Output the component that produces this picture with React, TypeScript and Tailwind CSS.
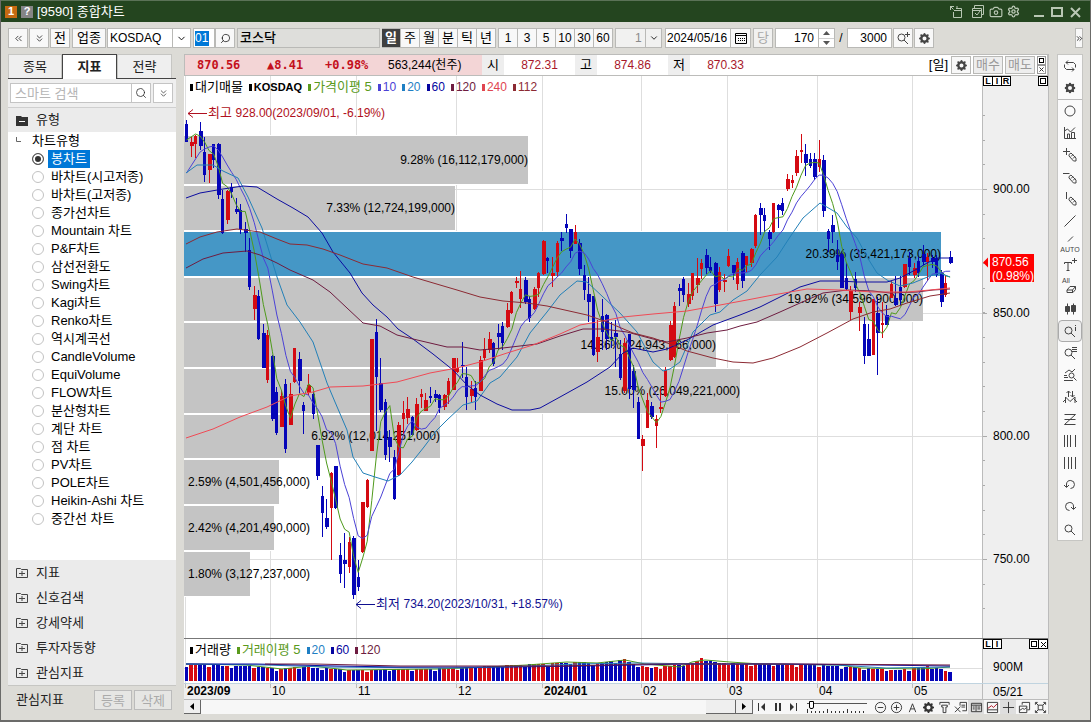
import React, { useState } from 'react';
import clsx from 'clsx';
import { twMerge } from 'tailwind-merge';
import { BsGearFill } from 'react-icons/bs';
import { Camera, ChevronDown, ChevronsDown, ChevronsLeft, ChevronsRight, Search, Settings } from 'lucide-react';

// one row per trading day: high, body top, body bottom, low (chart y), 1 = up day
type Candle = [number, number, number, number, number];

const CANDLES: Candle[] = [
    [120, 124, 142, 142, 0], [137, 142, 146, 157, 1], [135, 136, 144, 158, 1], [122, 131, 146, 150, 0], [137, 152, 175, 182, 0],
    [154, 154, 170, 183, 1], [144, 144, 160, 168, 0], [143, 144, 195, 199, 0], [190, 199, 233, 234, 0], [190, 191, 220, 224, 1],
    [183, 187, 192, 198, 0], [198, 209, 212, 214, 0], [204, 210, 229, 234, 0], [222, 229, 233, 252, 0], [238, 250, 287, 290, 0],
    [286, 295, 309, 320, 1], [290, 296, 339, 340, 0], [324, 333, 368, 368, 0], [330, 335, 380, 383, 1], [355, 356, 419, 421, 0],
    [387, 392, 433, 435, 0], [390, 396, 427, 427, 1], [379, 384, 449, 453, 0], [383, 394, 425, 425, 1], [348, 348, 382, 383, 1],
    [352, 359, 381, 393, 0], [402, 405, 411, 434, 0], [374, 385, 393, 395, 1], [390, 394, 414, 419, 0], [445, 445, 476, 480, 0],
    [486, 496, 513, 537, 0], [499, 518, 527, 529, 0], [472, 473, 508, 560, 1], [466, 466, 508, 509, 0], [543, 555, 574, 583, 0],
    [533, 560, 564, 588, 0], [537, 542, 567, 573, 1], [536, 538, 595, 599, 0], [560, 577, 587, 591, 0], [502, 502, 552, 553, 1],
    [479, 480, 507, 508, 1], [339, 339, 451, 451, 1], [319, 332, 377, 431, 0], [358, 383, 410, 412, 0], [399, 402, 455, 460, 0],
    [430, 437, 447, 462, 0], [450, 457, 499, 500, 0], [422, 425, 475, 476, 1], [401, 413, 419, 436, 1], [397, 409, 418, 424, 1],
    [416, 417, 435, 436, 0], [398, 404, 430, 431, 1], [389, 394, 397, 408, 1], [393, 400, 411, 411, 1], [387, 396, 398, 403, 0],
    [390, 394, 398, 402, 0], [394, 395, 408, 413, 0], [394, 395, 407, 410, 1], [378, 381, 395, 404, 1], [358, 358, 390, 390, 1],
    [358, 368, 372, 373, 1], [342, 365, 366, 378, 0], [367, 377, 397, 410, 0], [381, 389, 396, 402, 1], [381, 388, 397, 410, 0],
    [356, 360, 391, 391, 1], [338, 349, 358, 360, 1], [332, 339, 350, 353, 1], [342, 343, 364, 366, 0], [324, 333, 337, 350, 0],
    [322, 326, 343, 350, 0], [303, 310, 327, 328, 1], [291, 292, 313, 314, 1], [277, 281, 283, 288, 1], [271, 289, 299, 308, 1],
    [277, 280, 302, 304, 0], [296, 299, 318, 322, 0], [287, 289, 309, 310, 1], [272, 273, 288, 297, 1], [240, 241, 274, 275, 1],
    [257, 258, 261, 273, 0], [257, 273, 276, 287, 1], [241, 243, 272, 277, 1], [232, 238, 241, 251, 0], [214, 224, 228, 233, 0],
    [229, 229, 251, 258, 0], [225, 232, 244, 244, 1], [239, 243, 269, 275, 0], [265, 275, 290, 300, 0], [277, 294, 302, 322, 0],
    [296, 296, 355, 356, 0], [320, 337, 352, 362, 1], [299, 316, 332, 350, 0], [314, 315, 339, 350, 0], [322, 337, 340, 348, 0],
    [320, 333, 337, 367, 0], [340, 354, 378, 380, 0], [338, 343, 391, 393, 1], [334, 334, 389, 399, 0], [365, 371, 390, 408, 0],
    [397, 402, 439, 439, 0], [435, 439, 446, 471, 1], [393, 400, 428, 428, 1], [402, 406, 417, 419, 0], [415, 419, 426, 448, 1],
    [388, 407, 409, 413, 1], [367, 370, 396, 397, 1], [321, 325, 360, 361, 1], [302, 306, 357, 358, 1], [284, 288, 291, 306, 0],
    [277, 279, 295, 302, 0], [283, 294, 304, 307, 1], [273, 273, 296, 300, 1], [258, 278, 285, 293, 1], [259, 263, 269, 279, 1],
    [249, 255, 268, 274, 0], [257, 267, 271, 273, 0], [262, 263, 304, 312, 0], [267, 272, 290, 292, 1], [274, 280, 282, 292, 1],
    [249, 256, 266, 267, 1], [265, 265, 273, 280, 0], [258, 262, 284, 290, 1], [251, 253, 281, 288, 0], [256, 256, 265, 272, 1],
    [248, 249, 263, 267, 1], [214, 215, 246, 248, 1], [203, 208, 215, 235, 0], [208, 215, 221, 232, 0], [230, 232, 239, 250, 0],
    [203, 203, 232, 233, 1], [204, 205, 210, 228, 0], [198, 203, 211, 215, 0], [174, 179, 189, 191, 1], [175, 180, 183, 188, 1],
    [150, 156, 173, 176, 1], [134, 150, 152, 163, 1], [144, 154, 163, 176, 0], [153, 159, 166, 168, 0], [153, 159, 177, 180, 0],
    [140, 159, 167, 172, 1], [155, 160, 211, 217, 0], [229, 231, 239, 252, 0], [215, 225, 232, 243, 0], [240, 255, 262, 270, 0],
    [253, 254, 288, 288, 0], [262, 278, 289, 291, 0], [286, 291, 312, 320, 1], [272, 279, 288, 292, 0], [302, 307, 313, 331, 1],
    [317, 324, 356, 364, 0], [324, 339, 356, 356, 0], [299, 299, 355, 355, 1], [297, 313, 333, 375, 0], [302, 323, 325, 338, 1],
    [305, 315, 325, 325, 0], [281, 284, 298, 298, 1], [276, 298, 305, 306, 0], [276, 287, 300, 305, 0], [264, 264, 287, 288, 1],
    [252, 258, 267, 275, 0], [263, 268, 275, 278, 1], [257, 261, 273, 277, 0], [245, 254, 262, 265, 0], [253, 257, 262, 281, 1],
    [255, 258, 262, 268, 0], [255, 258, 275, 277, 0], [270, 273, 302, 307, 0], [275, 283, 295, 297, 1], [251, 257, 263, 264, 0],
];

const STEP = 4.5187;
const xOf = (i: number) => 186.5 + i * STEP;
const closeOf = (c: Candle) => (c[4] ? c[1] : c[2]);

function average(period: number, seed: number[]) {
    return CANDLES.map((_, i) => {
        if (i < seed.length) return `${xOf(i)},${seed[i]}`;
        const part = CANDLES.slice(Math.max(0, i - period + 1), i + 1);
        return `${xOf(i)},${part.reduce((s, c) => s + closeOf(c), 0) / part.length}`;
    }).join(' ');
}

const LINES = [
    { color: '#4f9a1c', points: average(5, [140, 137, 134, 136, 142]) },
    { color: '#4b42d6', points: average(10, [173, 166, 159, 152, 149, 147, 146, 150, 157, 165]) },
    { color: '#2280b8', points: '186,173 197,165 213,165 223,171 238,178 248,197 262,228 277,277 287,305 300,322 313,342 327,383 335,402 347,430 353,457 363,473 375,477 388,481 400,475 412,462 424,447 436,431 447,420 463,405 477,401 490,383 500,377 517,357 530,333 547,312 560,295 577,281 587,282 603,297 620,313 637,332 653,362 663,371 670,369 680,362 693,332 710,315 720,312 733,300 747,291 760,275 777,257 790,237 803,218 820,203 837,213 847,227 857,238 867,257 877,273 887,280 900,286 913,283 930,276 940,273 950,277' },
    { color: '#0c0ca0', points: '186,198 200,193 223,189 243,186 257,187 277,199 293,208 308,217 322,233 333,252 350,273 362,293 373,305 387,317 398,329 413,339 433,354 453,370 467,385 480,395 497,404 512,410 530,410 540,408 560,397 587,382 610,367 623,353 633,348 653,352 667,349 687,340 713,325 740,315 760,307 780,297 800,287 820,281 840,281 857,282 887,282 900,278 917,269 927,263 937,258 950,258' },
    { color: '#6e1c40', points: '186,268 203,259 223,253 247,251 260,255 277,263 290,270 313,280 330,292 347,308 363,323 380,326 397,335 413,339 447,347 463,347 480,350 503,348 537,344 560,336 583,329 603,329 627,332 653,339 667,342 687,338 707,333 727,330 740,326 757,322 780,312 800,303 823,293 847,290 873,291 890,293 917,292 933,290 950,289' },
    { color: '#f04a55', points: '186,438 213,429 240,417 267,407 290,396 313,392 330,387 363,386 397,382 430,373 457,368 480,362 507,353 533,345 560,334 580,325 597,322 623,317 653,314 687,311 720,305 747,300 773,295 807,289 840,290 873,292 907,292 930,290 950,288' },
    { color: '#8c2a33', points: '186,244 200,237 217,232 237,229 260,232 277,239 290,244 307,245 323,249 340,255 363,264 387,268 413,277 440,285 457,290 480,297 503,301 527,303 547,306 587,315 607,322 633,333 653,338 670,344 687,351 713,358 733,362 753,363 773,358 800,347 827,333 853,319 873,312 890,309 907,303 930,296 950,293' },
];

const BANDS = [
    { y: 136, h: 48, end: 528, label: '9.28% (16,112,179,000)' },
    { y: 186, h: 44, end: 455, label: '7.33% (12,724,199,000)' },
    { y: 232, h: 44, end: 941, label: '20.39% (35,421,173,000)', current: true },
    { y: 278, h: 43, end: 923, label: '19.92% (34,596,900,000)' },
    { y: 323, h: 44, end: 716, label: '14.36% (24,943,266,000)' },
    { y: 369, h: 44, end: 740, label: '15.00% (26,049,221,000)' },
    { y: 415, h: 43, end: 440, label: '6.92% (12,014,251,000)' },
    { y: 460, h: 44, end: 279, label: '2.59% (4,501,456,000)' },
    { y: 506, h: 44, end: 274, label: '2.42% (4,201,490,000)' },
    { y: 552, h: 44, end: 250, label: '1.80% (3,127,237,000)' },
];

const MONTHS = [
    { x: 186, label: '2023/09', bold: true }, { x: 271, label: '10' }, { x: 357, label: '11' }, { x: 457, label: '12' },
    { x: 543, label: '2024/01', bold: true }, { x: 642, label: '02' }, { x: 728, label: '03' }, { x: 818, label: '04' }, { x: 913, label: '05' },
];

const PRICES = [{ y: 189, label: '900.00' }, { y: 313, label: '850.00' }, { y: 436, label: '800.00' }, { y: 559, label: '750.00' }];

// bar tops: [day, y] anchors, filled in linearly
const VOLUME: [number, number][] = [[0, 665], [15, 666], [20, 669], [25, 667], [30, 668], [36, 670], [50, 669], [60, 668], [66, 666], [78, 664], [86, 662], [92, 663], [97, 659], [99, 664], [103, 668], [108, 665], [112, 663], [114, 658], [118, 663], [126, 664], [140, 665], [150, 668], [158, 670], [164, 666], [167, 669], [169, 672]];

function volumeTop(i: number) {
    const k = Math.max(1, VOLUME.findIndex(([d]) => d >= i));
    const [d0, y0] = VOLUME[k - 1];
    const [d1, y1] = VOLUME[k];
    return Math.round(y0 + ((y1 - y0) * (i - d0)) / (d1 - d0) + ((i * 7) % 5 === 0 ? 2 : 0));
}

const TYPES = ['봉차트', '바차트(시고저종)', '바차트(고저종)', '종가선차트', 'Mountain 차트', 'P&F차트', '삼선전환도', 'Swing차트', 'Kagi차트', 'Renko차트', '역시계곡선', 'CandleVolume', 'EquiVolume', 'FLOW차트', '분산형차트', '계단 차트', '점 차트', 'PV차트', 'POLE차트', 'Heikin-Ashi 차트', '중간선 차트'];

const BTN = 'flex h-5 items-center justify-center border border-[#b9b9b6] bg-[#f8f8f8]';

function Ico({ children, size = 14 }: { children: React.ReactNode; size?: number }) {
    return (
        <svg width={size} height={size} viewBox="0 0 14 14" fill="none" stroke="currentColor" strokeWidth="1" aria-hidden="true">
            {children}
        </svg>
    );
}

const pencil = <path d="M6 6.5 8 5l5 5v3h-2.500L6 8zM8 8.500l2-2M10 10.500l2-2" />;
const lens = <><circle cx="5.5" cy="6.5" r="3.5" /><path d="m8 9 4 4" /></>;

const TOOLS: { name: string; icon: React.ReactNode; on?: boolean }[] = [
    { name: '새로고침', icon: <path d="M5 1.5 3 3.5l2 2M3 3.5h7.5l2 2v3M9 8.5l2 2-2 2M11 10.5H3.5l-2-2v-3" /> },
    { name: '설정', icon: <g transform="translate(1.5 1.5)" fill="currentColor" stroke="none"><BsGearFill size={11} /></g> },
    { name: '원', icon: <circle cx="7" cy="7" r="5" /> },
    { name: '차트', icon: <path d="M1.5 1v11.5H13M1.5 5l3-2 3 3L12 1.5M4.5 12V8h2v4M8.5 12V6.500h3V12" /> },
    { name: '십자선', icon: <>{pencil}<path d="M3.5 0v7M0 3.5h7" /></> },
    { name: '수평선', icon: <>{pencil}<path d="M0 3.5h6.500" /></> },
    { name: '수직선', icon: <>{pencil}<path d="M3.5 0v7" /></> },
    { name: '추세선', icon: <path d="m1.500 12.500 11-11" /> },
    { name: '자동', icon: <path d="m5 5.500 5-5" /> },
    { name: '문자', icon: <path d="M1.500 6V4.500h7V6M5 4.500v8M3.500 12.500h3M9 2.500h5M11.500 0v5" /> },
    { name: '전체삭제', icon: <path d="m4 10 3-3.500h5.500v3L10 12.500H4zM4 10h5.500l3-3.500M9.500 10v2.500" /> },
    { name: '봉', icon: <path fill="currentColor" d="M4.500 1.500v11M10.500 1.500v11M2.500 4.500h4v5h-4zM8.500 3.500h4v6h-4z" /> },
    { name: '정보', on: true, icon: <>{lens}<path d="M12.500 1v1M12.500 3v4" /></> },
    { name: '목록', icon: <>{lens}<path d="M9 1.500h5M9 3.500h5M9 5.500h5" /></> },
    { name: '분석', icon: <><circle cx="8.500" cy="7.500" r="2.500" /><path d="m10.500 9.500 3 3M1 7.500h3M1 9.500h4M1 12.500h9M2 5l4-3 3 2 3-3" /></> },
    { name: '신호', icon: <path d="M5.500 7V1M3.500 3l2-2 2 2M9.500 1v6M7.500 5l2 2 2-2M2.500 13V7L7 11.500 12 7v6M0 12l3-3M11 9l3 3" /> },
    { name: '되돌림', icon: <path d="M1.500 2.500h11M1.500 7.500h11M1.500 12.500h11M12.500 2.500l-11 10" /> },
    { name: '간격', icon: <path d="M1.500 1v12M4.500 1v12M7.500 1v12M12.500 1v12" /> },
    { name: '등간격', icon: <path d="M1.500 1v12M5.500 1v12M8.500 1v12M12.500 1v12" /> },
    { name: '실행취소', icon: <path d="M3.500 9V6a4 4 0 1 1 4 4.500M1 7l2.500 2.500L6 7" /> },
    { name: '다시실행', icon: <path d="M10.500 9V6a4 4 0 1 0-4 4.500M8 7l2.500 2.500L13 7" /> },
    { name: '확대', icon: lens },
];

const BOTTOM: { name: string; icon: React.ReactNode; on?: boolean }[] = [
    { name: '축소', icon: <><circle cx="7" cy="7" r="5.500" /><path d="M4 7h6" /></> },
    { name: '확대', icon: <><circle cx="7" cy="7" r="5.500" /><path d="M4 7h6M7 4v6" /></> },
    { name: '글자', icon: <path d="m3.500 12 3.500-9 3.500 9M5 8.500h4" /> },
    { name: '설정', icon: <g transform="translate(1 1)" fill="currentColor" stroke="none"><BsGearFill size={12} /></g> },
    { name: '도구', icon: <path d="M2 4V1.500h10V4M4 4.500h6v2H8.500v6h-3v-6H4z" /> },
    { name: '엑셀', icon: <path d="M6.500 5V1.500h7v9H9M8 4.500h4M8 6.500h4M1 6l6 6M7 6l-6 6" /> },
    { name: '표', on: true, icon: <path d="M1.500 2.500h11v9h-11zM1.500 4.500h11M6.500 5v6M3 6.500h2M3 8.500h2M8 6.500h3M8 8.500h3" /> },
    { name: '차트', icon: <><path d="M1.500 1.500h11v11h-11zM2 9.500h10" /><path stroke="#b01020" d="m2 8 4-3 2 2 4-4" /></> },
    { name: '십자', on: true, icon: <path d="M7 1v12M1 7h12" /> },
    { name: '복사', icon: <path d="M4.500 4V1.500h8v8H10M1.500 5.500h8v7h-8zM2 10l3-2 2 1 2-2" /> },
    { name: '전체화면', icon: <path d="M1.500 4V1.500H4M10 1.500h2.500V4M12.500 10v2.500H10M4 12.500H1.500V10M4.500 4.500h5v5h-5zM2 2l2.500 2.500M12 2 9.500 4.500M2 12l2.500-2.500M12 12 9.500 9.500" /> },
];

function TitleBar() {
    return (
        <header className="flex h-[22px] shrink-0 items-center border-t border-[#5b7257] bg-[#24451f] pr-2 pl-1 text-white">
            <span className="mr-1 flex h-3 w-3 items-center justify-center bg-[#c66a12] text-[11px] font-bold">1</span>
            <span className="mr-1 flex h-3 w-3 items-center justify-center bg-[#858585] text-[11px] font-bold">?</span>
            <h1 className="text-[13px]">[9590] 종합차트</h1>
            <div className="ml-auto flex items-center gap-1 text-[#b9c7b4]">
                <button aria-label="고정"><Ico><path d="M1 1.500h4M1.500 1v4M1.500 1.500l3 3M4.500 7v5.500h8v-9H7M5 5.500h7M8 1v3" /></Ico></button>
                <button aria-label="복제" className="ml-1"><Ico><path d="M3.500 3V.5h9v9H11M1.500 3.500h9v9h-9zM1.500 5.500h9M4 8l2 2 3-4" /></Ico></button>
                <button aria-label="캡처"><Camera size={14} strokeWidth={2} /></button>
                <button aria-label="설정" className="mr-2"><Settings size={13} strokeWidth={2.5} /></button>
                <button aria-label="최소화"><Ico><path strokeWidth="2" d="M2 11h10" /></Ico></button>
                <button aria-label="최대화"><Ico><path strokeWidth="2" d="M2 3h10v8H2z" /></Ico></button>
                <button aria-label="닫기"><Ico><path strokeWidth="2" d="m3 3 9 9M12 3l-9 9" /></Ico></button>
            </div>
        </header>
    );
}

function Toolbar() {
    return (
        <div className="flex h-8 shrink-0 items-center px-[7px] text-xs">
            <button aria-label="이전" className={twMerge(BTN, 'w-5')}><ChevronsLeft size={11} strokeWidth={1.5} /></button>
            <button aria-label="펼치기" className={twMerge(BTN, 'ml-px w-5')}><ChevronsDown size={11} strokeWidth={1.5} /></button>
            <button className={twMerge(BTN, 'ml-px w-5 text-[13px]')}>전</button>
            <button className={twMerge(BTN, 'ml-0.5 w-[34px] text-[13px]')}>업종</button>
            <div className="relative ml-px h-5 w-[84px] border border-[#b9b9b6] bg-white">
                <select aria-label="시장" className="h-full w-full appearance-none pl-0.5 outline-none"><option>KOSDAQ</option></select>
                <span className="pointer-events-none absolute inset-y-0 right-0 flex w-[18px] items-center justify-center border-l border-[#b9b9b6]"><ChevronDown size={11} /></span>
            </div>
            <div className="ml-0.5 flex h-5 w-[22px] items-center border border-[#b9b9b6] bg-white pl-px">
                <input aria-label="종목코드" defaultValue="01" className="h-[15px] w-[14px] bg-[#0078d7] text-white outline-none" />
            </div>
            <button aria-label="종목 찾기" className={twMerge(BTN, 'w-5')}><Search size={11} strokeWidth={1.5} className="-scale-x-100" /></button>
            <output className="ml-0.5 flex h-5 w-[143px] items-center border border-[#b9b9b6] bg-[#dededb] pl-0.5 text-[13px] font-medium">코스닥</output>
            <div className="ml-0.5 flex">
                {['일', '주', '월', '분', '틱', '년'].map((p, i) => (
                    <button key={p} className={clsx('flex h-5 w-[19px] items-center justify-center border-y border-r border-[#b9b9b6] text-[13px]', i === 0 ? 'bg-[#3f3f3f] font-bold text-white' : 'bg-[#f8f8f8]')}>{p}</button>
                ))}
            </div>
            <div className="ml-0.5 flex border-l border-[#b9b9b6]">
                {['1', '3', '5', '10', '30', '60'].map(p => (
                    <button key={p} className="flex h-5 w-[19px] items-center justify-center border-y border-r border-[#b9b9b6] bg-[#f8f8f8]">{p}</button>
                ))}
            </div>
            <div className="relative ml-0.5 h-5 w-[47px] border border-[#b9b9b6] bg-[#f1f1f0]">
                <select aria-label="간격" className="h-full w-full appearance-none pl-[19px] text-[#8a8a8a] outline-none"><option>1</option></select>
                <span className="pointer-events-none absolute inset-y-0 right-0 flex w-4 items-center justify-center border-l border-[#b9b9b6]"><ChevronDown size={10} /></span>
            </div>
            <input aria-label="날짜" defaultValue="2024/05/16" className="ml-[3px] h-5 w-[66px] border border-[#b9b9b6] bg-white pl-px outline-none" />
            <button aria-label="달력" className={twMerge(BTN, '-ml-px w-[21px]')}><Ico><path d="M1.500 2.500h11v10h-11zM1.500 4.500h11" /><path d="M4 7.500h7M4 9.500h7" strokeDasharray="1 1" /></Ico></button>
            <button className={twMerge(BTN, 'ml-0.5 w-5 bg-[#f1f1f0] text-[13px] text-[#a9a9a9]')}>당</button>
            <div className="ml-0.5 flex h-5 border border-[#b9b9b6] bg-white">
                <input aria-label="표시 개수" defaultValue="170" className="w-[42px] pr-1 text-right outline-none" />
                <div className="flex w-4 flex-col border-l border-[#b9b9b6] text-[#555]">
                    <button aria-label="증가" className="flex flex-1 items-center justify-center border-b border-[#d0d0d0]"><svg width="7" height="4"><path d="M0 4h7L3.5 0z" fill="currentColor" /></svg></button>
                    <button aria-label="감소" className="flex flex-1 items-center justify-center"><svg width="7" height="4"><path d="M0 0h7L3.5 4z" fill="currentColor" /></svg></button>
                </div>
            </div>
            <span className="w-3 text-center">/</span>
            <input aria-label="전체 개수" defaultValue="3000" className="h-5 w-[45px] border border-[#b9b9b6] bg-white pr-1 text-right outline-none" />
            <button aria-label="확대" className={twMerge(BTN, 'ml-px w-5 text-[#444]')}><Ico>{lens}<path d="M9 3.500h5M11.500 1v5" /></Ico></button>
            <button aria-label="설정" className={twMerge(BTN, 'ml-px w-5 text-[#444]')}><BsGearFill size={11} /></button>
            <button aria-label="더보기" className="ml-auto flex h-5 w-2 items-center justify-center border border-[#b9b9b6] bg-[#f8f8f8]"><ChevronsRight size={9} className="shrink-0" /></button>
        </div>
    );
}

function Sidebar() {
    const [type, setType] = useState(TYPES[0]);
    return (
        <aside className="flex w-[168px] shrink-0 flex-col bg-[#ebebeb] text-[13px] text-[#222]">
            <div className="flex h-[25px] shrink-0 border-b border-[#444] bg-[#dcdbd6]">
                <button className="w-[54px] border border-b-0 border-[#c6c6c3] bg-[#efefef]">종목</button>
                <button className="-mb-px w-[55px] border border-b-0 border-[#444] bg-white font-bold">지표</button>
                <button className="w-[55px] border border-b-0 border-[#c6c6c3] bg-[#efefef]">전략</button>
            </div>
            <div className="flex h-[29px] shrink-0 items-center border-b border-[#cfcfcf] bg-[#efefef] pl-0.5">
                <input aria-label="스마트 검색" placeholder="스마트 검색" className="h-5 w-[122px] border border-[#c4c4c4] bg-white pl-1 outline-none placeholder:text-[#b5b5b5]" />
                <button aria-label="검색" className="-ml-px flex h-5 w-5 items-center justify-center border border-[#c4c4c4] bg-white"><Search size={12} strokeWidth={1.5} /></button>
                <button aria-label="옵션" className="ml-0.5 flex h-5 w-5 items-center justify-center border border-[#c4c4c4] bg-white"><ChevronsDown size={11} strokeWidth={1.5} /></button>
            </div>
            <button className="flex h-6 shrink-0 items-center gap-2 pl-2 text-left">
                <svg width="12" height="11" aria-hidden="true"><path d="M0 1h5l1 1h6v9H0z" fill="#333" /><path d="M3 6.500h6" stroke="#fff" /></svg>
                유형
            </button>
            <div role="radiogroup" aria-label="차트유형" className="flex-1 bg-white text-black">
                <div className="flex h-[18px] items-center pl-2">
                    <svg width="16" height="10" aria-hidden="true"><path d="M.5 1v4.500H5" fill="none" stroke="#666" /></svg>
                    차트유형
                </div>
                {TYPES.map(t => (
                    <label key={t} className="flex h-[18px] items-center pl-6">
                        <input type="radio" name="type" checked={t === type} onChange={() => setType(t)} className="h-3 w-3 appearance-none rounded-full border border-[#c2c2c2] bg-white checked:border-[#555] checked:bg-[#333] checked:shadow-[inset_0_0_0_2px_#fff]" />
                        <span className={clsx('ml-1 flex h-[18px] items-center px-[3px] whitespace-nowrap', t === type && 'bg-[#0078d7] text-white')}>{t}</span>
                    </label>
                ))}
            </div>
            {['지표', '신호검색', '강세약세', '투자자동향', '관심지표'].map(g => (
                <button key={g} className="flex h-[25px] shrink-0 items-center gap-2 pl-2 text-left">
                    <svg width="12" height="11" fill="none" stroke="#444" aria-hidden="true"><path d="M.5 1.500h4l1 1h6v8H.5zM3 6.500h6M6 4v5" /></svg>
                    {g}
                </button>
            ))}
            <div className="flex h-[29px] shrink-0 items-center border-t border-[#c6c6c3] bg-[#dcdbd6] pr-1 pl-2">
                관심지표
                <button className="ml-auto h-5 w-[38px] border border-[#bbb] bg-[#e6e6e4] leading-none text-[#aaa]">등록</button>
                <button className="ml-0.5 h-5 w-[38px] border border-[#bbb] bg-[#e6e6e4] leading-none text-[#aaa]">삭제</button>
            </div>
        </aside>
    );
}

function QuoteBar() {
    return (
        <div className="flex h-[22px] shrink-0 items-center border border-[#bcbcba] bg-white text-xs">
            <div className="flex h-full w-[297px] items-center bg-[#f3d5d6] pl-3 font-['DejaVu_Sans_Mono',monospace] font-bold whitespace-nowrap text-[#c4101c]">
                <span className="w-[70px]">870.56</span>
                <span className="w-[58px]">▲8.41</span>
                <span className="w-[63px]">+0.98%</span>
                <span className="font-['Liberation_Sans','Noto_Sans_CJK_KR',sans-serif] font-normal text-black">563,244(천주)</span>
            </div>
            {[['시', '872.31'], ['고', '874.86'], ['저', '870.33']].map(([k, v]) => (
                <React.Fragment key={k}>
                    <span className="flex h-full w-[22px] items-center justify-center bg-[#eee] text-[13px]">{k}</span>
                    <span className="w-[71px] text-center text-[#a8182a]">{v}</span>
                </React.Fragment>
            ))}
            <div className="mr-px ml-auto flex items-center text-[13px]">
                <span className="mr-[3px]">[일]</span>
                <button aria-label="차트 설정" className={twMerge(BTN, 'h-[18px] w-5 text-[#444]')}><BsGearFill size={11} /></button>
                <button className={twMerge(BTN, 'ml-0.5 h-[18px] w-[30px] bg-[#eee] text-[#999]')}>매수</button>
                <button className={twMerge(BTN, 'ml-0.5 h-[18px] w-[30px] bg-[#eee] text-[#999]')}>매도</button>
                <div className="ml-0.5 flex flex-col">
                    <button aria-label="최대화" className="h-[9px] w-[9px] border border-[#999] p-px"><span className="block h-[5px] w-[5px] border border-black" /></button>
                    <button aria-label="닫기" className="h-[9px] w-[9px] border border-[#999]"><svg width="7" height="7"><path d="m1.500 1.500 4 4m0-4-4 4" stroke="#333" /></svg></button>
                </div>
            </div>
        </div>
    );
}

function Legend({ items }: { items: { text: string; color: string; className?: string }[] }) {
    return (
        <div className="absolute top-0.5 left-1.5 flex h-[18px] items-center gap-[6px]">
            {items.map(({ text, color, className = 'text-xs' }) => (
                <span key={text} className={clsx('flex items-center gap-0.5 whitespace-nowrap', className)} style={{ color }}>
                    <i className="h-[7px] w-[3px] bg-current" />{text}
                </span>
            ))}
        </div>
    );
}

function PaneBoxes({ left, right }: { left: string[]; right: string[] }) {
    const box = '-ml-px flex h-[10px] w-[10px] items-center justify-center border border-black bg-white text-[9px] leading-none font-bold';
    return (
        <div className="absolute inset-x-0 top-0 flex justify-between pl-px">
            <div className="flex">{left.map(l => <button key={l} className={box}>{l}</button>)}</div>
            <div className="flex">{right.map(r => <button key={r} aria-label={r} className={box}>{r === '닫기' ? <svg width="7" height="7"><path d="m1 1 5 5m0-5-5 5" stroke="#000" /></svg> : <span className="block h-1.5 w-1.5 border border-black" />}</button>)}</div>
        </div>
    );
}

function PriceChart() {
    return (
        <div className="flex min-h-[562px] flex-1">
            <div className="relative flex min-w-0 flex-1 bg-white">
                <svg className="min-w-0 flex-1 text-xs" role="img" aria-label="KOSDAQ 일봉">
                    <g transform="translate(-184 -76)">
                        <g stroke="#dedede">
                            {MONTHS.map(m => <path key={m.x} d={`M${m.x - 0.5} 76v2000`} />)}
                            {PRICES.map(p => <path key={p.y} d={`M184 ${p.y + 0.5}h4000`} />)}
                        </g>
                        {BANDS.map(b => <path key={b.y} d={`M184 ${b.y - 1}H${b.end}v${b.h + 2}H184z`} fill="#fff" />)}
                        {BANDS.map(b => <path key={b.y} d={`M184 ${b.y}H${b.end}v${b.h}H184z`} fill={b.current ? '#4597c6' : '#c4c4c4'} />)}
                        {BANDS.map(b => (
                            <text key={b.y} x={b.end < 320 ? 188 : b.end} y={b.y + Math.floor(b.h / 2) + 4} textAnchor={b.end < 320 ? 'start' : 'end'}>{b.label}</text>
                        ))}
                        {CANDLES.map(([hi, top, bottom, lo, up], i) => {
                            const x = Math.round(xOf(i) - 0.5);
                            return (
                                <g key={i} fill={up ? '#d40a12' : '#0505b8'}>
                                    <rect x={x} y={hi} width="1" height={lo - hi} />
                                    <rect x={x - 1} y={top} width={i % 2 ? 4 : 3} height={Math.max(1, bottom - top)} />
                                </g>
                            );
                        })}
                        <g fill="none" strokeWidth="1">
                            {LINES.map(l => <polyline key={l.color} points={l.points} stroke={l.color} />)}
                        </g>
                        <path d="M207 113.500h-19m5-4-5 4 5 4" fill="none" stroke="#b01020" />
                        <text x="208" y="117" fill="#b01020"><tspan className="text-[13px]">최고 </tspan> 928.00(2023/09/01, -6.19%)</text>
                        <path d="M375 604.500h-19m5-4-5 4 5 4" fill="none" stroke="#101090" />
                        <text x="376" y="608" fill="#101090"><tspan className="text-[13px]">최저 </tspan> 734.20(2023/10/31, +18.57%)</text>
                    </g>
                </svg>
                <Legend items={[
                    { text: '대기매물', color: '#000', className: 'text-[13px]' }, { text: 'KOSDAQ', color: '#000', className: 'text-[11px] font-bold' },
                    { text: '가격이평 5', color: '#5a9a1c', className: 'text-[13px]' },
                    { text: '10', color: '#4b42d6' }, { text: '20', color: '#1f7fc4' }, { text: '60', color: '#0505a0' },
                    { text: '120', color: '#6e1c40' }, { text: '240', color: '#e04550' }, { text: '112', color: '#8c2a33' },
                ]} />
            </div>
            <div className="relative flex w-[66px] border-l border-[#bbb] bg-[#efefef]">
                <svg className="w-full text-xs">
                    <g transform="translate(-984 -76)">
                        <path d={Array.from({ length: 21 }, (_, i) => `M984 ${Math.round(115 + i * 24.66)}.5h2`).join('')} stroke="#aaa" />
                        {PRICES.map(p => (
                            <g key={p.y}>
                                <path d={`M984 ${p.y + 0.5}h4`} stroke="#aaa" />
                                <text x="994" y={p.y + 4}>{p.label}</text>
                            </g>
                        ))}
                        <path d="m984 262.500 5-5v10z" fill="#f00" />
                        <path d="M991 254h44v28h-44z" fill="#f00" />
                        <text x="993" y="266" fill="#fff">870.56</text>
                        <text x="993" y="280" fill="#fff">(0.98%)</text>
                    </g>
                </svg>
                <PaneBoxes left={['L', 'I', 'R']} right={['최대화']} />
            </div>
        </div>
    );
}

function VolumeChart() {
    return (
        <div className="flex h-[45px] shrink-0 border-t border-[#777]">
            <div className="relative flex min-w-0 flex-1 bg-white">
                <svg className="h-11 min-w-0 flex-1" role="img" aria-label="거래량">
                    <g transform="translate(-184 -639)">
                        <g stroke="#dedede">
                            {MONTHS.map(m => <path key={m.x} d={`M${m.x - 0.5} 639v44`} />)}
                            <path d="M184 668.500h4000" />
                        </g>
                        {CANDLES.map((c, i) => {
                            const top = volumeTop(i);
                            const x = Math.round(xOf(i) - 2);
                            return <rect key={i} x={x} y={top} width={Math.round(xOf(i + 1) - 2) - x - 1} height={681 - top} fill={c[4] ? '#d40a12' : '#0505b8'} />;
                        })}
                        <g fill="none">
                            <polyline stroke="#4f9a1c" points="186,664 246,665 282,669 312,666 347,670 437,669 487,667 527,665 567,662 597,663 625,660 645,664 680,667 692,662 705,660 730,662 760,664 840,665 860,668 920,669 950,667" />
                            <polyline stroke="#2280b8" points="186,664 266,665 326,667 446,668 506,667 576,664 636,663 706,664 766,664 836,665 886,668 950,667" />
                            <polyline stroke="#0c0ca0" points="186,664 256,664 336,666 396,667 516,667 586,666 686,664 786,664 876,665 950,666" />
                            <polyline stroke="#6e1c40" points="265,664 315,664 400,666 560,666 650,664 800,664 950,665" />
                        </g>
                    </g>
                </svg>
                <Legend items={[{ text: '거래량', color: '#000', className: 'text-[13px]' }, { text: '거래이평 5', color: '#5a9a1c', className: 'text-[13px]' }, { text: '20', color: '#1f7fc4' }, { text: '60', color: '#0505a0' }, { text: '120', color: '#6e1c40' }]} />
            </div>
            <div className="relative flex w-[66px] items-center border-l border-[#bbb] bg-[#efefef] pt-3 pl-[10px] text-xs">
                900M
                <PaneBoxes left={['L', 'I']} right={['최대화', '닫기']} />
            </div>
        </div>
    );
}

function DateAxis() {
    return (
        <div className="flex h-4 shrink-0 border-t border-[#c0d4e0] bg-[#efefef]">
            <svg className="h-4 min-w-0 flex-1 text-xs">
                {MONTHS.map(m => (
                    <g key={m.x}>
                        <path d={`M${m.x - 184.5} 0v4`} stroke="#bbb" />
                        <text x={m.x - 183} y="11" className={m.bold ? 'font-bold' : ''}>{m.label}</text>
                    </g>
                ))}
            </svg>
            <span className="flex w-[66px] items-center border-l border-[#bbb] pl-[10px] text-xs">05/21</span>
        </div>
    );
}

function ScrollRow() {
    const key = 'flex h-[14px] items-center justify-center border-r border-b border-[#666] bg-[#efefef]';
    return (
        <div className="flex h-[15px] shrink-0 items-center border-t border-[#bbb] bg-[#f7f7f7] text-[#333]">
            <button aria-label="왼쪽" className={clsx(key, 'w-[17px]')}><svg width="4" height="7"><path d="M4 0v7L0 3.500z" /></svg></button>
            <span className="flex-1" />
            <button aria-label="스크롤" className={clsx(key, 'w-[30px]')} />
            <button aria-label="오른쪽" className={clsx(key, 'w-[17px]')}><svg width="4" height="7"><path d="M0 0v7l4-3.500z" /></svg></button>
            <div className="ml-[3px] flex items-center gap-px">
                <button aria-label="처음"><Ico><path d="M2.500 3v8" /><path d="M9 3v8L5 7z" fill="currentColor" stroke="none" /></Ico></button>
                <button aria-label="일시정지"><Ico><path strokeWidth="2" d="M5 3v8M9 3v8" /></Ico></button>
                <button aria-label="마지막"><Ico><path d="M10.500 3v8" /><path d="M4 3v8l4-4z" fill="currentColor" stroke="none" /></Ico></button>
            </div>
            <div className="ml-[7px] flex w-[60px] flex-col">
                <input type="range" aria-label="속도" defaultValue={4} className="h-2 w-full appearance-none bg-[linear-gradient(#555,#555)] bg-[length:100%_1px] bg-[position:0_2px] bg-no-repeat [&::-webkit-slider-thumb]:h-2 [&::-webkit-slider-thumb]:w-[5px] [&::-webkit-slider-thumb]:appearance-none [&::-webkit-slider-thumb]:rounded-b-[2px] [&::-webkit-slider-thumb]:border [&::-webkit-slider-thumb]:border-black [&::-webkit-slider-thumb]:bg-white" />
                <svg className="h-1 w-full"><path d={Array.from({ length: 16 }, (_, i) => `M${i * 4}.5 ${i % 5 ? 2 : 0}v4`).join('')} stroke="#333" /></svg>
            </div>
            <div className="ml-[5px] flex">
                {BOTTOM.map(b => (
                    <button key={b.name} aria-label={b.name} className={clsx('flex h-[14px] w-4 items-center justify-center', b.on && 'bg-[#dedede]')}><Ico size={13}>{b.icon}</Ico></button>
                ))}
            </div>
        </div>
    );
}

function ToolRail() {
    return (
        <nav className="flex w-[26px] shrink-0 flex-col self-start border border-[#c6c6c3] bg-[#fafafa] text-[#444]">
            {TOOLS.map((t, i) => (
                <button
                    key={t.name}
                    aria-label={t.name}
                    className={clsx('relative flex h-[22px] flex-col items-center justify-center', i === 1 && 'box-content border-b border-[#b9b9b9]', t.on && 'rounded border border-[#aaa] bg-[#ededed]')}
                >
                    <Ico>{t.icon}</Ico>
                    {t.name === '자동' && <span className="absolute bottom-0 text-[7px] leading-[9px]">AUTO</span>}
                    {t.name === '전체삭제' && <span className="absolute top-0 left-1 text-[7px] leading-[9px]">All</span>}
                </button>
            ))}
        </nav>
    );
}

export default function App() {
    return (
        <div className="flex min-h-screen flex-col border-x border-b-2 border-[#6b6b69] bg-[#dcdbd6] font-['Liberation_Sans','Noto_Sans_CJK_KR',sans-serif] text-black">
            <TitleBar />
            <Toolbar />
            <div className="flex flex-1 gap-2 px-[7px] pb-1.5">
                <Sidebar />
                <main className="flex min-w-0 flex-1 flex-col border-r border-[#bbb]">
                    <QuoteBar />
                    <PriceChart />
                    <VolumeChart />
                    <DateAxis />
                    <ScrollRow />
                </main>
                <ToolRail />
            </div>
        </div>
    );
}
